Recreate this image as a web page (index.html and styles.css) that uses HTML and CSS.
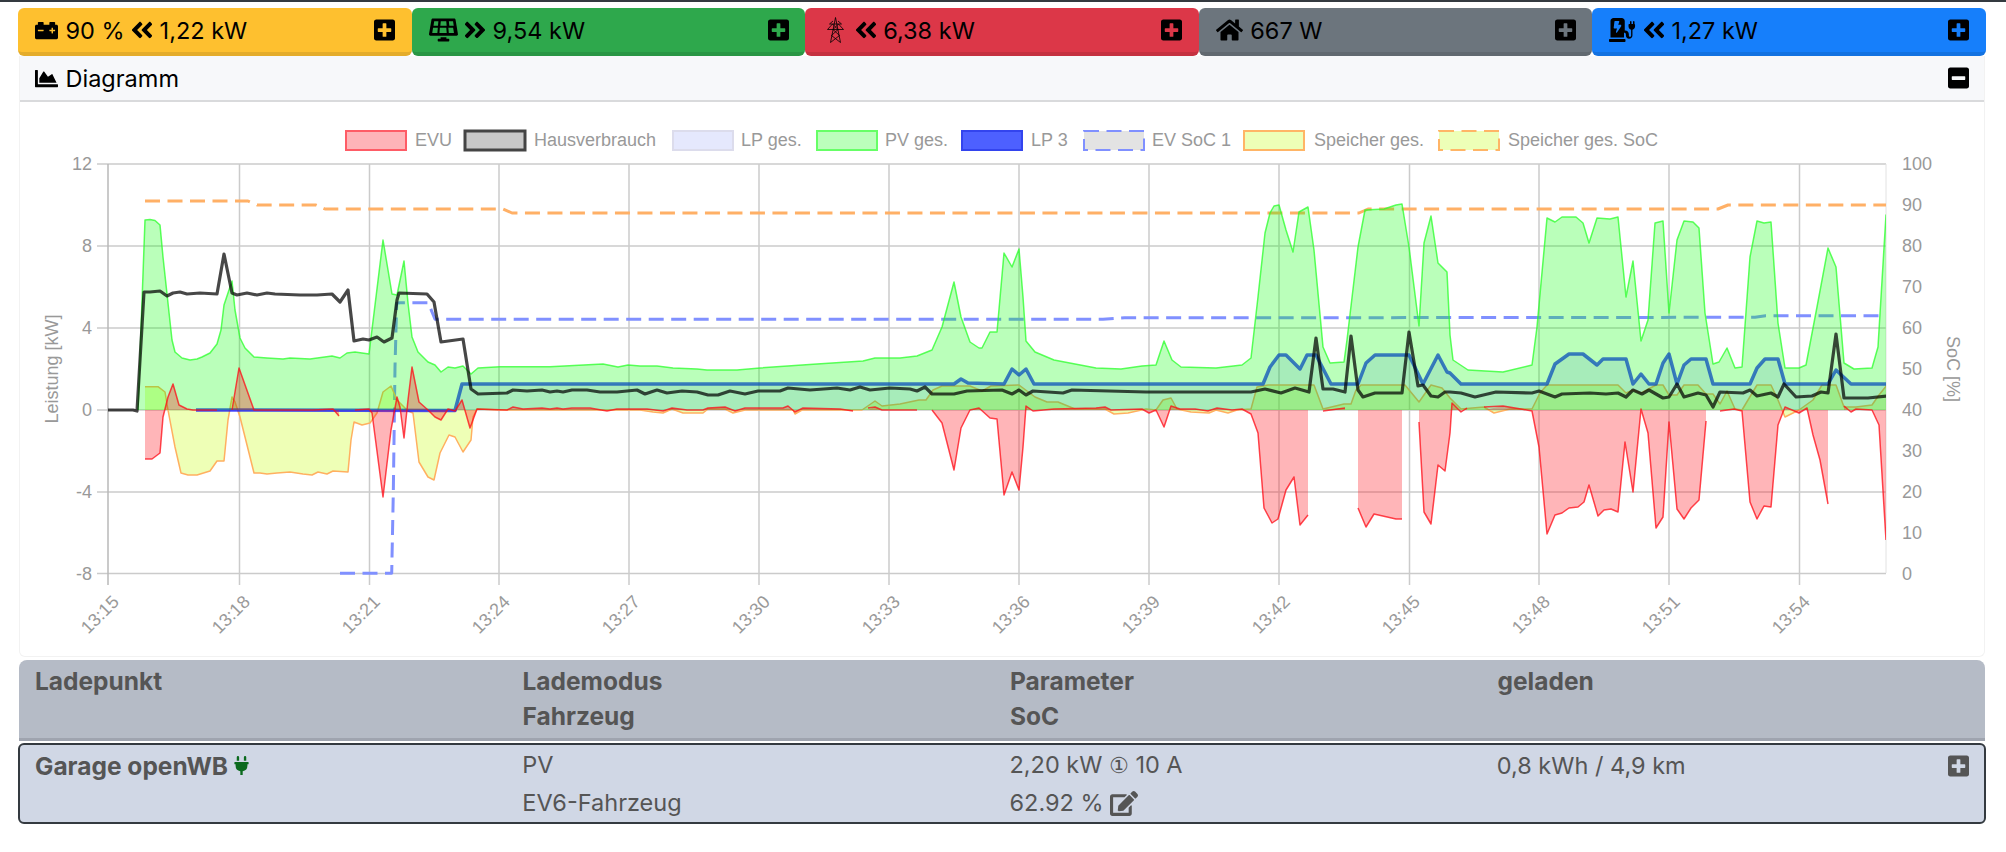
FILE: index.html
```html
<!DOCTYPE html>
<html lang="de">
<head>
<meta charset="utf-8">
<title>openWB</title>
<link rel="stylesheet" href="styles.css">
</head>
<body>
<svg class="defs" aria-hidden="true">
  <symbol id="i-plus" viewBox="0 0 448 512"><path fill-rule="evenodd" d="M400 32H48C21.5 32 0 53.5 0 80v352c0 26.5 21.5 48 48 48h352c26.5 0 48-21.5 48-48V80c0-26.5-21.5-48-48-48zm-32 252c0 6.6-5.4 12-12 12h-92v92c0 6.6-5.4 12-12 12h-56c-6.600 0-12-5.4-12-12v-92H92c-6.600 0-12-5.400-12-12v-56c0-6.600 5.400-12 12-12h92v-92c0-6.600 5.400-12 12-12h56c6.600 0 12 5.400 12 12v92h92c6.600 0 12 5.400 12 12v56z"/></symbol>
  <symbol id="i-minus" viewBox="0 0 448 512"><path fill-rule="evenodd" d="M400 32H48C21.5 32 0 53.5 0 80v352c0 26.500 21.500 48 48 48h352c26.500 0 48-21.500 48-48V80c0-26.500-21.500-48-48-48zM92 296c-6.600 0-12-5.400-12-12v-56c0-6.600 5.400-12 12-12h264c6.600 0 12 5.400 12 12v56c0 6.600-5.400 12-12 12H92z"/></symbol>
  <symbol id="i-left" viewBox="28 0 392 512"><path d="M223.700 239l136-136c9.400-9.400 24.600-9.400 33.900 0l22.600 22.600c9.400 9.400 9.400 24.600 0 33.900L319.900 256l96.400 96.400c9.400 9.400 9.400 24.600 0 33.900L393.700 409c-9.400 9.400-24.600 9.400-33.900 0l-136-136c-9.500-9.400-9.500-24.600-.1-34zm-192 34l136 136c9.400 9.400 24.600 9.400 33.900 0l22.600-22.600c9.400-9.400 9.400-24.600 0-33.900L127.900 256l96.400-96.400c9.400-9.400 9.400-24.600 0-33.900L201.700 103c-9.400-9.400-24.600-9.400-33.900 0l-136 136c-9.500 9.400-9.500 24.600-.1 34z"/></symbol>
  <symbol id="i-right" viewBox="28 0 392 512"><path d="M224.300 273l-136 136c-9.400 9.400-24.600 9.400-33.900 0l-22.600-22.600c-9.400-9.400-9.400-24.600 0-33.900l96.400-96.400-96.400-96.400c-9.400-9.400-9.400-24.600 0-33.900L54.300 103c9.400-9.400 24.600-9.400 33.900 0l136 136c9.500 9.400 9.500 24.600.1 34zm192-34l-136-136c-9.400-9.400-24.600-9.400-33.900 0l-22.600 22.600c-9.400 9.400-9.400 24.600 0 33.900l96.400 96.400-96.400 96.400c-9.400 9.400-9.400 24.600 0 33.900l22.600 22.600c9.400 9.400 24.600 9.400 33.900 0l136-136c9.400-9.200 9.400-24.400 0-33.800z"/></symbol>
  <symbol id="i-battery" viewBox="0 0 512 512"><path fill-rule="evenodd" d="M480 128h-32V80c0-8.840-7.160-16-16-16h-96c-8.840 0-16 7.160-16 16v48H192V80c0-8.840-7.160-16-16-16H80c-8.840 0-16 7.160-16 16v48H32c-17.670 0-32 14.330-32 32v256c0 17.670 14.330 32 32 32h448c17.670 0 32-14.330 32-32V160c0-17.670-14.330-32-32-32zM192 264c0 4.420-3.580 8-8 8H72c-4.420 0-8-3.580-8-8v-16c0-4.420 3.580-8 8-8h112c4.420 0 8 3.580 8 8v16zm256 0c0 4.420-3.580 8-8 8h-40v40c0 4.420-3.580 8-8 8h-16c-4.420 0-8-3.580-8-8v-40h-40c-4.420 0-8-3.580-8-8v-16c0-4.420 3.580-8 8-8h40v-40c0-4.420 3.580-8 8-8h16c4.420 0 8 3.580 8 8v40h40c4.420 0 8 3.580 8 8v16z"/></symbol>
  <symbol id="i-solar" viewBox="0 0 640 512"><path fill-rule="evenodd" d="M431.980 448.010l-47.970.05V416h-128v32.210l-47.980.05c-8.820.01-15.970 7.160-15.980 15.990l-.05 31.730c-.01 8.850 7.170 16.030 16.020 16.020l223.960-.26c8.820-.01 15.970-7.160 15.980-15.980l.04-31.730c.01-8.850-7.170-16.030-16.020-16.020zM585.200 26.740C582.580 11.310 568.990 0 553.060 0H86.970C71.040 0 57.450 11.310 54.830 26.740-3.720 371.550.02 349.170.02 352c0 17.600 14.250 32 32 32h575.960c17.720 0 32-14.370 32-32 0-2.850 3.760 19.600-54.780-325.260zM259.830 64h120.330l9.770 96H250.060l9.770-96zm-75.170 256H71.090L90.040 208h105.050l-10.430 112zm12.570-160H99.800l15.160-96h92.600l-10.330 96zm32.820 160l9.770-112h141.460l9.770 112H229.990zm208.130-256h92.600l15.160 96h-97.430l-10.330-96zm-.92 256l-10.430-112h105.050l18.950 112H438.160z"/></symbol>
  <symbol id="i-pylon" viewBox="0 0 17 26"><path class="pylon" d="M8.500 .5 3.500 25.500M8.500 .5l5 25M2.500 7h12M.5 12.500h16M2.500 7l3.500-3M14.500 7l-3.500-3M.5 12.500l5-5.500M16.500 12.500l-5-5.500M5.500 7l5.500 5.500M11.500 7 6 12.500M6 12.500l6.500 6M11 12.500l-6.500 6M4.500 18.500l9 7M12.500 18.500l-9 7"/></symbol>
  <symbol id="i-home" viewBox="0 0 576 512"><path d="M280.370 148.260L96 300.110V464a16 16 0 0 0 16 16l112.060-.29a16 16 0 0 0 15.920-16V368a16 16 0 0 1 16-16h64a16 16 0 0 1 16 16v95.640a16 16 0 0 0 16 16.050L464 480a16 16 0 0 0 16-16V300L295.670 148.260a12.190 12.190 0 0 0-15.300 0zM571.600 251.470L488 182.560V44.050a12 12 0 0 0-12-12h-56a12 12 0 0 0-12 12v72.610L318.470 43a48 48 0 0 0-61 0L4.340 251.470a12 12 0 0 0-1.600 16.900l25.500 31A12 12 0 0 0 45.150 301l235.220-193.740a12.190 12.190 0 0 1 15.300 0L530.900 301a12 12 0 0 0 16.900-1.600l25.500-31a12 12 0 0 0-1.700-16.930z"/></symbol>
  <symbol id="i-station" viewBox="0 0 576 512"><path fill-rule="evenodd" d="M336 448H16c-8.800 0-16 7.200-16 16v32c0 8.800 7.200 16 16 16h320c8.800 0 16-7.200 16-16v-32c0-8.800-7.200-16-16-16zm208-320V80c0-8.800-7.200-16-16-16s-16 7.200-16 16v48h-32V80c0-8.800-7.200-16-16-16s-16 7.200-16 16v48h-16c-8.800 0-16 7.200-16 16v32c0 35.800 23.500 66.100 56 76.300V376c0 13.200-10.800 24-24 24s-24-10.800-24-24v-28c0-44.200-35.800-80-80-80h-8V64c0-35.300-28.700-64-64-64H96C60.700 0 32 28.700 32 64v352h288V316h8c17.700 0 32 14.300 32 32v24c0 37.500 28.900 70.300 66.300 71.900 40 1.700 73.700-30.300 73.700-70V252c32.500-10.200 56-40.500 56-76.300v-32c0-8.800-7.200-16-16-16zM260.100 175.600l-89.400 132.600c-2.200 3.500-6.100 5.800-10.700 5.800-7.700 0-13.500-7.100-11.700-14.500L171.400 224H112c-7.200 0-12.800-6.300-12-13.900l16-136c.7-6 5.800-10.100 12-10.100h80c7.900 0 13.700 7.500 11.600 15.100L196.600 144H248c9.300 0 15.100 10 12.100 31.600z"/></symbol>
  <symbol id="i-area" viewBox="0 0 512 512"><path d="M500 384c6.600 0 12 5.400 12 12v40c0 6.600-5.400 12-12 12H12c-6.600 0-12-5.400-12-12V76c0-6.600 5.400-12 12-12h40c6.600 0 12 5.400 12 12v308h436zM372.700 159.500L288 216l-85.300-113.700c-5.100-6.800-15.500-6.300-19.900 1L96 248v104h384l-89.900-187.800c-3.200-6.500-11.400-8.700-17.400-4.700z"/></symbol>
  <symbol id="i-plug" viewBox="0 0 384 512"><path d="M320,32a32,32,0,0,0-64,0v96h64Zm48,128H16A16,16,0,0,0,0,176v32a16,16,0,0,0,16,16H32v32A160.070,160.070,0,0,0,160,412.800V512h64V412.800A160.070,160.070,0,0,0,352,256V224h16a16,16,0,0,0,16-16V176A16,16,0,0,0,368,160ZM128,32a32,32,0,0,0-64,0v96h64Z"/></symbol>
  <symbol id="i-edit" viewBox="0 0 576 512"><path d="M402.600 83.200l90.200 90.200c3.800 3.800 3.800 10 0 13.800L274.400 405.600l-92.800 10.300c-12.400 1.400-22.900-9.100-21.500-21.500l10.300-92.800L388.800 83.200c3.800-3.800 10-3.800 13.800 0zm162-22.900l-48.800-48.800c-15.200-15.200-39.900-15.200-55.200 0l-35.400 35.400c-3.800 3.800-3.800 10 0 13.800l90.200 90.200c3.800 3.800 10 3.800 13.800 0l35.400-35.400c15.200-15.300 15.200-40 0-55.200zM384 346.200V448H64V128h229.800c3.200 0 6.200-1.300 8.500-3.500l40-40c7.600-7.600 2.200-20.500-8.500-20.500H48C21.500 64 0 85.500 0 112v352c0 26.500 21.500 48 48 48h352c26.500 0 48-21.500 48-48V306.200c0-10.700-12.900-16-20.500-8.500l-40 40c-2.200 2.300-3.500 5.300-3.500 8.500z"/></symbol>
</svg>

<div class="topline"></div>
<main class="page">
  <nav class="bars">
    <div class="bar bar-yellow">
      <svg class="ic ic-battery"><use href="#i-battery"/></svg><span>90 %</span>
      <svg class="ic ic-chev"><use href="#i-left"/></svg><span>1,22 kW</span>
      <svg class="ic ic-box push"><use href="#i-plus"/></svg>
    </div>
    <div class="bar bar-green">
      <svg class="ic ic-solar"><use href="#i-solar"/></svg>
      <svg class="ic ic-chev"><use href="#i-right"/></svg><span>9,54 kW</span>
      <svg class="ic ic-box push"><use href="#i-plus"/></svg>
    </div>
    <div class="bar bar-red">
      <svg class="ic ic-pylon"><use href="#i-pylon"/></svg>
      <svg class="ic ic-chev"><use href="#i-left"/></svg><span>6,38 kW</span>
      <svg class="ic ic-box push"><use href="#i-plus"/></svg>
    </div>
    <div class="bar bar-grey">
      <svg class="ic ic-home"><use href="#i-home"/></svg><span>667 W</span>
      <svg class="ic ic-box push"><use href="#i-plus"/></svg>
    </div>
    <div class="bar bar-blue">
      <svg class="ic ic-home"><use href="#i-station"/></svg>
      <svg class="ic ic-chev"><use href="#i-left"/></svg><span>1,27 kW</span>
      <svg class="ic ic-box push"><use href="#i-plus"/></svg>
    </div>
  </nav>

  <section class="card">
    <header class="card-head">
      <svg class="ic ic-battery"><use href="#i-area"/></svg><span>Diagramm</span>
      <svg class="ic ic-box push"><use href="#i-minus"/></svg>
    </header>
    <svg class="chart" viewBox="20 102 1964 554" role="img" aria-label="Diagramm">
      <defs>
        <clipPath id="plot"><rect x="108" y="150" width="1778" height="430"/></clipPath>
        <clipPath id="plot-store"><rect x="145" y="150" width="1741" height="430"/></clipPath>
      </defs>

      <g class="legend">
        <rect class="k-evu" x="346" y="131" width="60" height="19"/><text x="415" y="146">EVU</text>
        <rect class="k-house" x="465" y="131" width="60" height="19"/><text x="534" y="146">Hausverbrauch</text>
        <rect class="k-lp" x="673" y="131" width="60" height="19"/><text x="741" y="146">LP ges.</text>
        <rect class="k-pv" x="817" y="131" width="60" height="19"/><text x="885" y="146">PV ges.</text>
        <rect class="k-lp3" x="962" y="131" width="60" height="19"/><text x="1031" y="146">LP 3</text>
        <rect class="k-ev" x="1084" y="131" width="60" height="19"/><text x="1152" y="146">EV SoC 1</text>
        <rect class="k-st" x="1244" y="131" width="60" height="19"/><text x="1314" y="146">Speicher ges.</text>
        <rect class="k-sts" x="1439" y="131" width="60" height="19"/><text x="1508" y="146">Speicher ges. SoC</text>
      </g>

      <path class="grid" d="M97 164H1886M97 246H1886M97 328H1886M97 410H1886M97 492H1886M97 573.500H1886"/>
      <path class="grid" d="M239.500 164V585M369.500 164V585M499 164V585M629 164V585M759 164V585M889 164V585M1019 164V585M1149 164V585M1279 164V585M1409.500 164V585M1539 164V585M1669 164V585M1799.500 164V585"/>
      <path class="axis" d="M108 164V585"/>
      <path class="axis-r" d="M1886 164V573"/>

      <g class="ticks-l">
        <text x="92" y="170">12</text><text x="92" y="252">8</text><text x="92" y="334">4</text><text x="92" y="416">0</text><text x="92" y="498">-4</text><text x="92" y="580">-8</text>
      </g>
      <g class="ticks-r">
        <text x="1902" y="170">100</text><text x="1902" y="211">90</text><text x="1902" y="252">80</text><text x="1902" y="293">70</text><text x="1902" y="334">60</text><text x="1902" y="375">50</text><text x="1902" y="416">40</text><text x="1902" y="457">30</text><text x="1902" y="498">20</text><text x="1902" y="539">10</text><text x="1902" y="580">0</text>
      </g>
      <text class="title-c" transform="translate(58 369) rotate(-90)">Leistung [kW]</text>
      <text class="title-c" transform="translate(1947 369) rotate(90)">SoC [%]</text>
      <g class="ticks-x">
        <text transform="translate(120 603) rotate(-45)">13:15</text>
        <text transform="translate(251 603) rotate(-45)">13:18</text>
        <text transform="translate(381 603) rotate(-45)">13:21</text>
        <text transform="translate(511 603) rotate(-45)">13:24</text>
        <text transform="translate(641 603) rotate(-45)">13:27</text>
        <text transform="translate(771 603) rotate(-45)">13:30</text>
        <text transform="translate(901 603) rotate(-45)">13:33</text>
        <text transform="translate(1031 603) rotate(-45)">13:36</text>
        <text transform="translate(1161 603) rotate(-45)">13:39</text>
        <text transform="translate(1291 603) rotate(-45)">13:42</text>
        <text transform="translate(1421 603) rotate(-45)">13:45</text>
        <text transform="translate(1551 603) rotate(-45)">13:48</text>
        <text transform="translate(1681 603) rotate(-45)">13:51</text>
        <text transform="translate(1811 603) rotate(-45)">13:54</text>
      </g>

      <path class="s-soc-st" d="M145 201H245L248 201 257 205H316L325 209H503L512 213H1359L1368 209H1718L1728 205H1886"/>
      <path class="s-soc-ev" d="M340 573.300H391.700L393.300 493 395 367 396.700 303.300 400 302.700H428.300L435 319.300H1103L1124.500 317.700H1321L1755 317.300 1765.600 315.700H1881"/>

      <g clip-path="url(#plot-store)">
        <polyline class="s-store" points="144,410 144,386.700 158,386.700 165,392 168,410 175,447 181,473 188,475 197,475 210,471 217,461 224,461 228,420 232,397 235,402 240,417 254,473 260,473 267,474 277,473 290,472 303,474 312,475 318,472 327,474 333,471 348,472 351,440 354,422 362,425 370,423 377,413 383,392 391,386 397,400 408,411 413,413 419,462 428,477 434,480 440,453 449,435 455,437 463,452 471,440 473,417 477,409 500,410 640,410 653,412 663,413 672,409 683,413 703,413 708,409 725,409 733,413 745,410 793,410 795,414 802,410 862,410 875,401 882,406 900,404 919,400 926,400 933,390 942,386 970,386 982,391 991,386 1019,385 1035,397 1047,402 1058,402 1075,409 1105,409 1114,414 1128,413 1146,409 1156,410 1163,400 1171,398 1177,409 1191,412 1209,413 1216,410 1228,413 1237,410 1251,409 1257,387 1268,385 1314,385 1323,409 1344,404 1351,404 1356,390 1361,385 1405,385 1419,402 1431,385 1442,388 1450,398 1461,409 1484,407 1494,413 1510,409 1532,409 1540,393 1547,385 1618,385 1626,393 1633,390 1641,393 1656,385 1663,385 1669,395 1677,395 1684,385 1698,385 1706,394 1713,394 1720,404 1727,391 1735,409 1742,410 1757,385 1771,385 1778,400 1785,417 1799,410 1813,400 1822,385 1836,385 1844,407 1856,407 1872,405 1879,395 1887,385 1887,410"/>
      </g>

      <g clip-path="url(#plot)">
        <polyline class="s-lp3" points="196,410 455,410.500 462,384 954,384 961,379 968,383 1004,384 1012,369 1019,375 1026,369 1034,384 1263,384 1270,367 1279,355 1286,355 1300,369 1307,355 1316,355 1331,384 1358,384 1366,363 1375,355 1409,355 1423,384 1438,355 1447,372 1450,373 1461,384 1547,384 1555,364 1569,354 1583,354 1597,365 1603,359 1626,359 1633,384 1641,374 1649,384 1656,384 1663,363 1669,354 1677,384 1684,365 1691,359 1706,359 1713,384 1750,384 1757,368 1765,359 1778,359 1785,384 1828,384 1836,370 1851,384 1888,384 1888,410"/>

        <polyline class="s-pv" points="138,410 145,220 150,219.500 155,220.500 160,225 163,257 172,340 175,352 182,358 190,360 197,359 202,357 210,353 217,344 221,330 224,305 232,281 235,310 240,338 245,348 254,357 267,358 283,359 290,358 310,359 332,356 340,358 347,353 355,352 369,354 383,240 392,294 397,295 404,261 408,303 412,337 418,352 428,362 435,365 441,372 448,367 455,368 463,366 471,374 478,368 500,366.700 550,366.700 603,364 618,367 628,365 640,366 657,366 673,368 697,369 707,370 737,370 760,368 817,364 863,361 875,358 890,358 900,358 917,356 932,350 942,327 954,282 961,317 970,342 979,348 982,348 990,332 997,332 1004,253 1012,267 1019,249 1023,297 1026,341 1035,352 1054,360 1096,368 1121,369 1142,366 1156,365 1164,341 1172,360 1181,367 1216,368 1242,365 1251,358 1258,297 1265,233 1270,213 1274,206 1279,205 1286,230 1293,252 1299,212 1308,207 1314,250 1323,347 1330,363 1344,362 1347,340 1358,247 1365,210 1384,209 1396,205 1402,204 1409,247 1419,326 1424,243 1431,216 1438,263 1447,272 1450,335 1453,360 1468,370 1503,372 1532,365 1537,327 1547,218 1555,222 1562,217 1576,217 1583,223 1589,243 1597,218 1610,219 1618,217 1626,297 1633,261 1641,341 1648,320 1655,223 1663,221 1669,313 1677,240 1684,221 1693,222 1699,228 1705,313 1713,364 1719,362 1727,348 1735,368 1742,367 1750,257 1757,221 1764,223 1771,222 1778,323 1785,368 1799,368 1806,365 1817,307 1828,248 1836,267 1844,363 1854,369 1872,368 1878,347 1886,215 1888,215 1888,410"/>

        <polyline class="s-house" points="108,410 133,410 137,411 144,292 150,292 160,291 167,296 173,293 180,292 187,294 200,293 217,294 224,254 232,293 237,295 247,293 257,295 267,293 275,294 300,295 317,295 332,294 340,302 348,290 354,341 363,339 369,340 377,337 384,342 392,338 397,300 399,293 427,294 434,302 441,342 463,339 471,389 478,394 507,393 513,390 527,391 542,390 550,392 557,391 563,392 572,390 587,390 600,392 617,392 637,390 645,394 657,390 667,393 682,391 697,392 708,395 718,395 730,391 745,394 758,391 780,391 788,388 810,390 837,388 850,390 860,387 870,390 890,388 910,389 917,391 925,387 932,394 954,394 967,391 1002,390 1012,394 1019,390 1026,395 1033,391 1063,393 1072,390 1146,392 1251,392 1265,389 1281,393 1295,388 1309,392 1316,338 1323,389 1333,389 1345,392 1351,336 1358,390 1363,397 1375,393 1402,393 1409,332 1418,386 1423,385 1431,396 1438,397 1445,392 1450,392 1461,393 1475,397 1496,392 1532,393 1539,391 1555,397 1562,394 1590,393 1606,394 1618,393 1626,397 1633,390 1642,394 1649,390 1663,398 1669,397 1677,384 1684,397 1698,393 1706,395 1713,407 1720,392 1743,393 1750,390 1757,396 1771,393 1778,397 1784,384 1796,397 1812,396 1821,392 1828,393 1836,334 1844,398 1868,398 1888,396"/>

        <path class="s-evu-fill" d="M145 410V459L152 459 160 453 163 417 168 397 173 384 179 405 187 409 193 410H217ZM232 410L239 368 254 410H313L333 409 339 416 339 410ZM355 410L369 409 372 413 383 497 391 430 397 397 400 407 404 438 408 400 412 367 419 402 428 410 435 417 441 420 448 409 455 411 462 400 470 428 477 409 507 410 513 407 523 409 542 408 550 409 557 408 563 409 572 408 590 408 607 411 617 409 647 409 663 411 672 408 687 410 703 410 708 408 725 407 735 411 745 408 783 408 788 406 795 412 803 408 840 409 853 411V410ZM868 410L875 407 882 410H917ZM932 410L942 423 954 470 961 428 970 410 979 408 990 418 997 419 1004 495 1012 472 1019 490 1023 447 1026 406 1033 411 1054 409 1096 408 1105 407 1111 410 1142 409 1149 413 1156 410 1164 427 1171 406 1180 409 1195 409 1208 411 1217 408 1232 410 1242 409 1251 414 1258 433 1264 508 1272 523 1278 519 1286 490 1294 477 1300 525 1308 515V410ZM1323 410L1345 408V410ZM1358 410V508L1366 527 1374 514 1396 519 1402 519V410ZM1419 410V422L1424 512 1431 524 1438 465 1445 471 1450 433 1452 403 1461 412 1467 408V410ZM1484 410L1503 406 1521 409 1532 411 1539 447 1547 534 1555 515 1562 513 1569 508 1578 507 1584 502 1589 485 1598 516 1604 510 1611 509 1618 512 1625 442 1633 492 1641 409 1648 433 1656 528 1663 517 1669 422 1677 509 1684 519 1691 508 1699 500 1706 421V410ZM1720 410L1734 409 1742 411 1750 502 1757 519 1764 506 1771 507 1778 425 1785 407 1799 413 1807 408 1813 435 1820 460 1828 504V410ZM1844 410V406L1851 412 1856 409 1872 410 1879 425 1886 540V410Z"/>
        <path class="s-evu" d="M145 459L152 459 160 453 163 417 168 397 173 384 179 405 187 409 193 410H217M232 410L239 368 254 410H313L333 409 339 416M355 410L369 409 372 413 383 497 391 430 397 397 400 407 404 438 408 400 412 367 419 402 428 410 435 417 441 420 448 409 455 411 462 400 470 428 477 409 507 410 513 407 523 409 542 408 550 409 557 408 563 409 572 408 590 408 607 411 617 409 647 409 663 411 672 408 687 410 703 410 708 408 725 407 735 411 745 408 783 408 788 406 795 412 803 408 840 409 853 411M868 408L875 407 882 410H917M932 410L942 423 954 470 961 428 970 410 979 408 990 418 997 419 1004 495 1012 472 1019 490 1023 447 1026 406 1033 411 1054 409 1096 408 1105 407 1111 410 1142 409 1149 413 1156 410 1164 427 1171 406 1180 409 1195 409 1208 411 1217 408 1232 410 1242 409 1251 414 1258 433 1264 508 1272 523 1278 519 1286 490 1294 477 1300 525 1308 515M1323 411L1345 408M1358 508L1366 527 1374 514 1396 519 1402 519M1419 422L1424 512 1431 524 1438 465 1445 471 1450 433 1452 403 1461 412 1467 408M1484 407L1503 406 1521 409 1532 411 1539 447 1547 534 1555 515 1562 513 1569 508 1578 507 1584 502 1589 485 1598 516 1604 510 1611 509 1618 512 1625 442 1633 492 1641 409 1648 433 1656 528 1663 517 1669 422 1677 509 1684 519 1691 508 1699 500 1706 421M1720 411L1734 409 1742 411 1750 502 1757 519 1764 506 1771 507 1778 425 1785 407 1799 413 1807 408 1813 435 1820 460 1828 504M1844 406L1851 412 1856 409 1872 410 1879 425 1886 540"/>
      </g>
    </svg>
  </section>

  <section class="lp-table">
    <div class="lp-head">
      <div>Ladepunkt</div><div>Lademodus</div><div>Parameter</div><div>geladen</div>
      <div></div><div>Fahrzeug</div><div>SoC</div><div></div>
    </div>
    <div class="lp-row">
      <div class="lp-name">Garage openWB<svg class="ic ic-plug"><use href="#i-plug"/></svg></div>
      <div>PV</div>
      <div>2,20 kW <span class="circ">①</span> 10 A</div>
      <div class="lp-last">0,8 kWh / 4,9 km<svg class="ic ic-small"><use href="#i-plus"/></svg></div>
      <div></div>
      <div>EV6-Fahrzeug</div>
      <div class="lp-edit">62.92 %<svg class="ic ic-edit"><use href="#i-edit"/></svg></div>
      <div></div>
    </div>
  </section>
</main>
</body>
</html>
```

FILE: styles.css
```css
* { box-sizing: border-box; }
html, body { margin: 0; padding: 0; background: #fff; }
body { font-family: Inter, "Liberation Sans", sans-serif; font-size: 23.500px; color: #000; overflow: hidden; }
.defs { display: none; }
.topline { height: 2px; background: #343a40; }
.page { padding: 6px 20px 0 18px; }

.bars { display: flex; height: 48px; }
.bar {
  flex: 1 1 0;
  display: flex;
  align-items: center;
  gap: 7.500px;
  padding: 0 16.500px 0 17px;
  border-radius: 6px;
  border-bottom: 4px solid rgba(0, 0, 0, .1);
}
.bar-yellow { background: #fec02f; }
.bar-green { background: #2ea84c; }
.bar-red { background: #dc3748; }
.bar-grey { background: #6c757d; }
.bar-blue { background: #167ffb; }

.ic { display: block; fill: currentColor; flex: none; }
.ic-battery { width: 23px; height: 23px; }
.ic-chev { width: 20px; height: 26px; }
.ic-box { width: 21px; height: 24px; }
.ic-solar { width: 29px; height: 24px; }
.ic-pylon { width: 17px; height: 26px; margin: 0 4.500px; }
.ic-home { width: 27px; height: 24px; }
.push { margin-left: auto; }
.pylon { fill: none; stroke: currentColor; stroke-width: .8; }

.card { margin: 0 1px; border: 1px solid #f2f2f2; border-top: 0; border-radius: 0 0 6px 6px; }
.card-head {
  display: flex;
  align-items: center;
  gap: 7.500px;
  height: 46px;
  padding: 0 15px;
  background: #f7f8fa;
  border-bottom: 2px solid #d9dadc;
}
.chart { display: block; width: 1964px; height: 554px; font-family: "Liberation Sans", Arial, sans-serif; font-size: 18px; fill: #999; }

.legend rect { stroke-width: 2; }
.k-evu { fill: #feb4b8; stroke: #fe5c66; }
.k-house { fill: #c8c8c8; stroke: #444; }
.legend .k-house { stroke-width: 3; }
.k-lp { fill: #e5e8fd; stroke: #dcdcec; }
.k-pv { fill: #bbffbb; stroke: #66ff66; }
.k-lp3 { fill: #4d60ff; stroke: #3344ee; }
.k-ev { fill: #e3e3e3; stroke: #8090ff; stroke-dasharray: 15 7.500; }
.k-st { fill: #edffb7; stroke: #ffb566; }
.k-sts { fill: #edffb7; stroke: #ffb566; stroke-dasharray: 15 7.500; }

.grid { fill: none; stroke: #cbcbcb; stroke-width: 1.500; }
.axis { fill: none; stroke: #b8b8b8; stroke-width: 1.500; }
.axis-r { fill: none; stroke: #e2e2e2; stroke-width: 1; }
.ticks-l text { text-anchor: end; }
.ticks-r text { text-anchor: start; }
.ticks-x text { text-anchor: end; }
.title-c { text-anchor: middle; }

.s-soc-st, .s-soc-ev { fill: none; stroke-width: 3; stroke-dasharray: 15 7.500; stroke-linejoin: round; }
.s-soc-st { stroke: #ffb066; }
.s-soc-ev { stroke: #8090ff; }
.s-store { fill: rgba(200, 255, 13, .3); stroke: #ffb060; stroke-width: 1.500; stroke-linejoin: round; }
.s-lp3 { fill: rgba(0, 0, 255, .1); stroke: rgba(0, 0, 255, .7); stroke-width: 3.500; stroke-linejoin: round; }
.s-house { fill: none; stroke: rgba(0, 0, 0, .72); stroke-width: 3.200; stroke-linejoin: round; }
.s-pv { fill: rgba(0, 255, 0, .27); stroke: rgba(40, 255, 40, .75); stroke-width: 1.500; stroke-linejoin: round; }
.s-evu-fill { fill: rgba(255, 10, 20, .3); stroke: none; }
.s-evu { fill: none; stroke: rgba(255, 10, 20, .75); stroke-width: 1.500; stroke-linejoin: round; }

.lp-table { color: #555; }
.lp-head, .lp-row { display: grid; grid-template-columns: repeat(4, 1fr); }
.lp-head {
  margin: 3px 1px 2px;
  padding: 4px 0 4px 16px;
  height: 81px;
  line-height: 35px;
  font-size: 24.500px;
  font-weight: 700;
  background: #b5bbc6;
  border-bottom: 3px solid #9fa4af;
  border-radius: 8px 8px 0 0;
}
.lp-row {
  padding: 2px 0 0 15px;
  height: 81px;
  line-height: 36.500px;
  background: #d0d7e5;
  border: 2px solid #343a40;
  border-radius: 6px;
}
.lp-name, .lp-last, .lp-edit { display: flex; align-items: center; }
.lp-name { font-size: 24.500px; font-weight: 700; gap: 6px; }
.lp-edit { gap: 6px; }
.lp-last { justify-content: space-between; padding-right: 15px; }
.ic-plug { width: 15px; height: 19px; color: #0b6a1e; }
.ic-small { width: 21px; height: 24px; }
.ic-edit { width: 28px; height: 25px; }
.circ { font-family: "DejaVu Sans", sans-serif; font-size: 22px; line-height: 1; }
```
